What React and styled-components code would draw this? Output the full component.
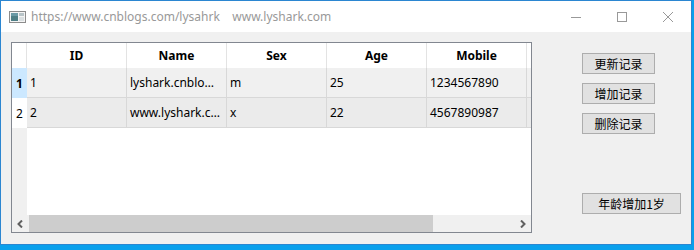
import React from "react"
import styled, { createGlobalStyle } from "styled-components"

const GlobalStyle = createGlobalStyle`
  html, body {
    margin: 0;
    padding: 0;
  }
  body {
    font-family: "Noto Sans", "Noto Sans CJK SC", sans-serif;
  }
`

const Screen = styled.div`
  width: 694px;
  height: 250px;
  background: #0aa0ec;
  overflow: hidden;
`

const Window = styled.div`
  width: 692px;
  height: 245px;
  box-sizing: border-box;
  border: 1px solid #2b86d1;
  background: #f0f0f0;
  display: flex;
  flex-direction: column;
`

const TitleBar = styled.div`
  height: 31px;
  background: #fff;
  display: flex;
  align-items: center;
  padding-left: 8px;
`

const TitleText = styled.div`
  margin-left: 5px;
  font-size: 12px;
  color: #999;
  white-space: pre;
  flex: 1;
`

const Controls = styled.div`
  display: flex;
  height: 31px;
`

const ControlBtn = styled.div`
  width: 46px;
  height: 31px;
  display: flex;
  align-items: center;
  justify-content: center;
`

const Content = styled.div`
  flex: 1;
  display: flex;
  padding: 10px 0 0 10px;
`

const TableFrame = styled.div`
  width: 521px;
  height: 191px;
  box-sizing: border-box;
  border: 1px solid #828790;
  background: #fff;
  display: flex;
  flex-direction: column;
  overflow: hidden;
`

const GridArea = styled.div`
  flex: 1;
  display: flex;
  overflow: hidden;
`

const RowHeaderCol = styled.div`
  width: 15px;
  flex-shrink: 0;
  background: #f0f0f0;
  display: flex;
  flex-direction: column;
`

const Corner = styled.div`
  height: 25px;
  background: #fff;
  box-sizing: border-box;
  border-right: 1px solid #e3e3e3;
`

const RowHead = styled.div`
  height: 30px;
  background: ${(p) => (p.$active ? "#cce8ff" : "#fff")};
  font-weight: ${(p) => (p.$active ? 700 : 400)};
  font-size: 12px;
  color: #000;
  display: flex;
  align-items: center;
  justify-content: center;
`

const Body = styled.div`
  flex: 1;
  overflow: hidden;
`

const HeaderRow = styled.div`
  height: 25px;
  display: flex;
  width: 700px;
`

const HeadCell = styled.div`
  width: 100px;
  flex-shrink: 0;
  box-sizing: border-box;
  border-right: 1px solid #e3e3e3;
  font-size: 12px;
  font-weight: 700;
  color: #000;
  display: flex;
  align-items: center;
  justify-content: center;
`

const DataRow = styled.div`
  height: 30px;
  display: flex;
  width: 700px;
  box-sizing: border-box;
  border-bottom: 1px solid #d8d8d8;
  background: ${(p) => p.$bg};
`

const Cell = styled.div`
  width: 100px;
  flex-shrink: 0;
  box-sizing: border-box;
  border-right: 1px solid #d8d8d8;
  font-size: 12px;
  color: #000;
  padding-left: 3px;
  display: flex;
  align-items: center;
  white-space: nowrap;
  overflow: hidden;
`

const ScrollBar = styled.div`
  height: 17px;
  flex-shrink: 0;
  display: flex;
  background: #f0f0f0;
`

const ArrowBtn = styled.div`
  width: 17px;
  height: 17px;
  display: flex;
  align-items: center;
  justify-content: center;
`

const Track = styled.div`
  flex: 1;
  display: flex;
`

const Thumb = styled.div`
  width: 404px;
  height: 17px;
  background: #cdcdcd;
`

const SidePanel = styled.div`
  margin-left: 50px;
  display: flex;
  flex-direction: column;
  align-items: flex-start;
  padding-top: 11px;
`

const Button = styled.div`
  width: ${(p) => p.$w}px;
  height: 21px;
  margin-top: ${(p) => p.$gap}px;
  box-sizing: border-box;
  border: 1px solid #adadad;
  background: #e1e1e1;
  font-family: "Noto Sans CJK SC", sans-serif;
  font-size: 12px;
  color: #000;
  display: flex;
  align-items: center;
  justify-content: center;
`

const AppIcon = () => (
  <svg width="17" height="12" viewBox="0 0 17 12">
    <rect x="0.5" y="0.5" width="16" height="11" fill="#f4f4f4" stroke="#8c8c8c" />
    <rect x="2" y="2" width="7" height="8" fill="#4f7f86" />
    <rect x="2" y="2" width="7" height="3" fill="#6b9aa6" />
    <rect x="10" y="2" width="5" height="3" fill="#b8c4c8" />
    <rect x="10" y="6" width="5" height="4" fill="#d9dfe1" />
  </svg>
)

const Minimize = () => (
  <svg width="10" height="10" viewBox="0 0 10 10">
    <line x1="0" y1="5.5" x2="10" y2="5.5" stroke="#999" strokeWidth="1" />
  </svg>
)

const Maximize = () => (
  <svg width="10" height="10" viewBox="0 0 10 10">
    <rect x="0.5" y="0.5" width="9" height="9" fill="none" stroke="#999" strokeWidth="1" />
  </svg>
)

const CloseIcon = () => (
  <svg width="10" height="10" viewBox="0 0 10 10">
    <path d="M0 0 L10 10 M10 0 L0 10" stroke="#999" strokeWidth="1" />
  </svg>
)

const Chevron = ({ dir }) => (
  <svg width="7" height="8" viewBox="0 0 7 8">
    <path
      d={dir === "left" ? "M5 0.5 L1.5 4 L5 7.5" : "M2 0.5 L5.5 4 L2 7.5"}
      fill="none"
      stroke="#606060"
      strokeWidth="2"
    />
  </svg>
)

const columns = ["ID", "Name", "Sex", "Age", "Mobile", ""]

const rows = [
  { id: "1", name: "lyshark.cnblo…", sex: "m", age: "25", mobile: "1234567890", bg: "#f0f0f0" },
  { id: "2", name: "www.lyshark.c…", sex: "x", age: "22", mobile: "4567890987", bg: "#ebebeb" },
]

const App = () => {
  return (
    <Screen>
      <GlobalStyle />
      <Window>
        <TitleBar>
          <AppIcon />
          <TitleText>https://www.cnblogs.com/lysahrk    www.lyshark.com</TitleText>
          <Controls>
            <ControlBtn>
              <Minimize />
            </ControlBtn>
            <ControlBtn>
              <Maximize />
            </ControlBtn>
            <ControlBtn>
              <CloseIcon />
            </ControlBtn>
          </Controls>
        </TitleBar>

        <Content>
          <TableFrame>
            <GridArea>
              <RowHeaderCol>
                <Corner />
                <RowHead $active>1</RowHead>
                <RowHead>2</RowHead>
              </RowHeaderCol>
              <Body>
                <HeaderRow>
                  {columns.map((c, i) => (
                    <HeadCell key={i}>{c}</HeadCell>
                  ))}
                </HeaderRow>
                {rows.map((r) => (
                  <DataRow key={r.id} $bg={r.bg}>
                    <Cell>{r.id}</Cell>
                    <Cell>{r.name}</Cell>
                    <Cell>{r.sex}</Cell>
                    <Cell>{r.age}</Cell>
                    <Cell>{r.mobile}</Cell>
                    <Cell />
                  </DataRow>
                ))}
              </Body>
            </GridArea>
            <ScrollBar>
              <ArrowBtn>
                <Chevron dir="left" />
              </ArrowBtn>
              <Track>
                <Thumb />
              </Track>
              <ArrowBtn>
                <Chevron dir="right" />
              </ArrowBtn>
            </ScrollBar>
          </TableFrame>

          <SidePanel>
            <Button $w={73} $gap={0}>更新记录</Button>
            <Button $w={73} $gap={9}>增加记录</Button>
            <Button $w={73} $gap={9}>删除记录</Button>
            <Button $w={99} $gap={59}>年龄增加1岁</Button>
          </SidePanel>
        </Content>
      </Window>
    </Screen>
  )
}

export default App
